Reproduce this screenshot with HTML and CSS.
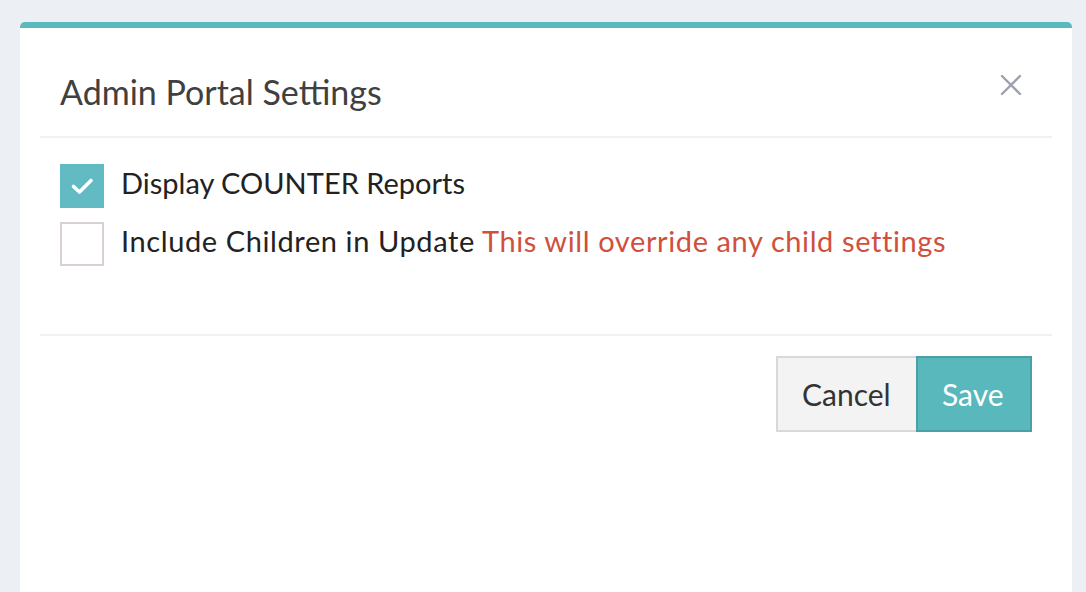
FILE: index.html
```html
<!DOCTYPE html>
<html lang="en">
<head>
    <meta charset="UTF-8">
    <meta name="viewport" content="width=device-width, initial-scale=1.0">
    <title>Admin Portal Settings</title>
    <link rel="stylesheet" href="styles.css">
</head>
<body>
    <div class="modal">
        <!-- 标题栏 -->
        <div class="modal_header">
            <h2 class="modal_title">Admin Portal Settings</h2>
            <a href="javascript:;" class="close_btn">
                <svg width="22" height="22" viewBox="0 0 22 22">
                    <path d="M2 2 L20 20 M20 2 L2 20" stroke="#9ca1ae" stroke-width="2.4" stroke-linecap="round"/>
                </svg>
            </a>
        </div>
        <!-- 选项 -->
        <div class="modal_body">
            <label class="check_row">
                <span class="check_box checked">
                    <svg width="24" height="24" viewBox="0 0 24 24">
                        <path d="M3.5 12.5 L9.5 18 L21 6.5" fill="none" stroke="#fff" stroke-width="3.6" stroke-linecap="round" stroke-linejoin="round"/>
                    </svg>
                </span>
                <span class="check_text">Display COUNTER Reports</span>
            </label>
            <label class="check_row">
                <span class="check_box"></span>
                <span class="check_text wide">Include Children in Update <span class="warn">This will override any child settings</span></span>
            </label>
        </div>
        <!-- 底部按钮 -->
        <div class="modal_footer">
            <a href="javascript:;" class="btn btn_cancel">Cancel</a>
            <a href="javascript:;" class="btn btn_save">Save</a>
        </div>
    </div>
</body>
</html>
```

FILE: styles.css
```css
*{
    box-sizing: border-box;
}
body{
    margin: 0;
    padding: 22px 14px 0 20px;
    background-color: #eceff4;
    font-family: Lato, "Open Sans", sans-serif;
    overflow: hidden;
}
.modal{
    background-color: #fff;
    border-top: 6px solid #5ab9bd;
    border-radius: 5px 5px 0 0;
    height: 570px;
    padding: 0 20px;
}
.modal_header{
    display: flex;
    align-items: center;
    justify-content: space-between;
    height: 110px;
    padding: 0 20px;
    border-bottom: 2px solid #f1f1f1;
}
.modal_title{
    margin: 18px 0 0;
    font-size: 34px;
    font-weight: 400;
    color: #404040;
}
.close_btn{
    display: flex;
    margin-right: 10px;
    margin-top: 6px;
}
.modal_body{
    padding: 26px 20px 68px;
    display: flex;
    flex-direction: column;
    gap: 14px;
}
.check_row{
    display: flex;
    align-items: center;
    gap: 17px;
    cursor: pointer;
}
.check_box{
    width: 44px;
    height: 44px;
    border: 2px solid #d8d1cf;
    display: flex;
    align-items: center;
    justify-content: center;
}
.check_box.checked{
    background-color: #62bac3;
    border-color: #62bac3;
}
.check_text{
    font-size: 29px;
    color: #222;
    padding-bottom: 7px;
}
.check_text.wide{
    letter-spacing: 0.6px;
}
.warn{
    color: #d0503d;
}
.modal_footer{
    border-top: 2px solid #f1f1f1;
    display: flex;
    justify-content: flex-end;
    padding: 20px 20px 0;
}
.btn{
    display: block;
    height: 76px;
    line-height: 72px;
    padding: 0 24px;
    font-size: 30px;
    text-decoration: none;
    border: 2px solid;
}
.btn_cancel{
    width: 140px;
    background-color: #f3f3f3;
    border-color: #d9d9d9;
    border-right: none;
    color: #333;
}
.btn_save{
    width: 116px;
    background-color: #59b8bc;
    border-color: #4aa0a4;
    color: #fff;
}
```
